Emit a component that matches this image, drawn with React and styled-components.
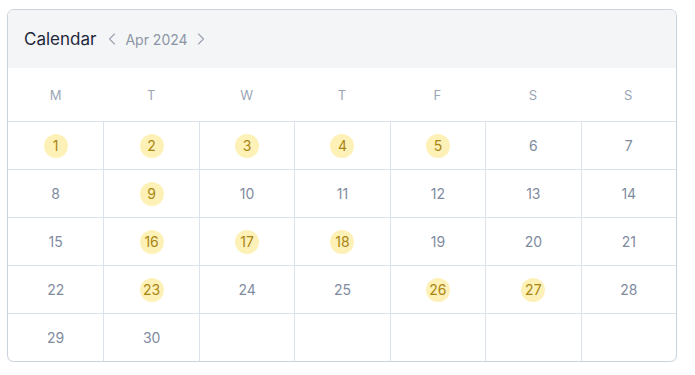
import styled, { createGlobalStyle } from 'styled-components'
import { ChevronLeft, ChevronRight } from 'lucide-react'

const GlobalStyle = createGlobalStyle`
  * { box-sizing: border-box; }
  body {
    margin: 0;
    background: #ffffff;
    font-family: Inter, 'Noto Sans', sans-serif;
  }
`

const weekdays = ['M', 'T', 'W', 'T', 'F', 'S', 'S']
const marked = [1, 2, 3, 4, 5, 9, 16, 17, 18, 23, 26, 27]

export default function App() {
  const days = Array.from({ length: 35 }, (_, i) => (i < 30 ? i + 1 : null))

  return (
    <Page>
      <GlobalStyle />
      <Card>
        <Header>
          <Title>Calendar</Title>
          <MonthNav>
            <ChevronLeft size={20} strokeWidth={1.3} />
            <span>Apr 2024</span>
            <ChevronRight size={20} strokeWidth={1.3} />
          </MonthNav>
        </Header>
        <Weekdays>
          {weekdays.map((d, i) => (
            <Weekday key={i}>{d}</Weekday>
          ))}
        </Weekdays>
        <Grid>
          {days.map((d, i) => (
            <Cell key={i} $first={i % 7 === 0}>
              {d && <Day $marked={marked.includes(d)}>{d}</Day>}
            </Cell>
          ))}
        </Grid>
      </Card>
    </Page>
  )
}

const Page = styled.div`
  padding: 9px 18px 0 7px;
`

const Card = styled.div`
  width: 670px;
  border: 1px solid #cbd3de;
  border-radius: 7px;
  overflow: hidden;
  background: #fff;
  box-shadow: 0 1px 2px rgba(15, 23, 42, 0.06);
`

const Header = styled.div`
  height: 58px;
  background: #f4f5f7;
  display: flex;
  align-items: center;
  padding: 0 16px;
  gap: 6px;
`

const Title = styled.h2`
  margin: 0;
  font-size: 17px;
  font-weight: 400;
  color: #1e293b;
`

const MonthNav = styled.div`
  display: flex;
  align-items: center;
  gap: 3px;
  color: #8b95a5;
  font-size: 14px;
  svg {
    color: #9aa3b1;
  }
`

const Weekdays = styled.div`
  display: grid;
  grid-template-columns: repeat(7, 1fr);
  height: 53px;
`

const Weekday = styled.div`
  display: flex;
  align-items: center;
  justify-content: center;
  font-size: 13px;
  color: #9aa5b6;
`

const Grid = styled.div`
  display: grid;
  grid-template-columns: repeat(7, 1fr);
`

const Cell = styled.div`
  height: 48px;
  border-top: 1px solid #dde3ea;
  border-left: ${(p) => (p.$first ? 'none' : '1px solid #dde3ea')};
  display: flex;
  align-items: center;
  justify-content: center;
`

const Day = styled.span`
  width: 24px;
  height: 24px;
  border-radius: 50%;
  display: flex;
  align-items: center;
  justify-content: center;
  font-size: 14px;
  color: ${(p) => (p.$marked ? '#a98512' : '#7f8ca0')};
  background: ${(p) => (p.$marked ? '#fdf1b8' : 'transparent')};
`
